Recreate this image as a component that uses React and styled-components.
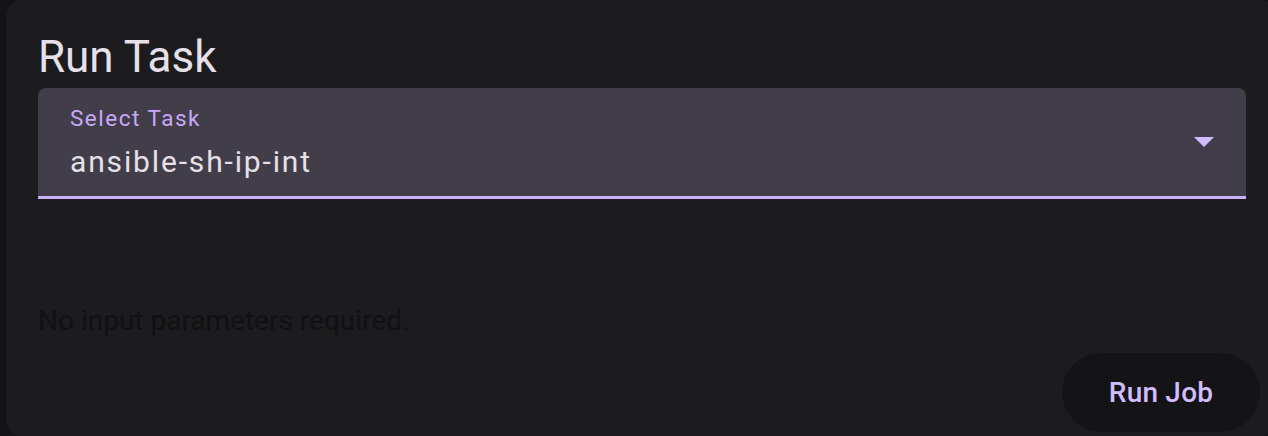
import styled, { createGlobalStyle } from "styled-components";

const GlobalStyle = createGlobalStyle`
  html, body {
    margin: 0;
    padding: 0;
    background: #141316;
    overflow: hidden;
    font-family: Roboto, "Liberation Sans", sans-serif;
  }
`;

const Card = styled.div`
  margin-left: 6px;
  margin-right: -10px;
  height: 436px;
  box-sizing: border-box;
  background: #1c1b1e;
  border-radius: 16px;
  padding: 26px 32px 0 32px;
  display: flex;
  flex-direction: column;
`;

const Title = styled.h1`
  margin: 0;
  font-size: 44px;
  font-weight: 400;
  line-height: 62px;
  color: #e6e0e9;
`;

const Field = styled.div`
  position: relative;
  height: 111px;
  box-sizing: border-box;
  background: #413e49;
  border-radius: 8px 8px 0 0;
  border-bottom: 3px solid #cbb0fb;
  padding: 16px 32px 0 32px;
  display: flex;
  flex-direction: column;
  cursor: pointer;
`;

const Label = styled.span`
  font-size: 22.5px;
  line-height: 28px;
  color: #c9a8f7;
  letter-spacing: 1.5px;
`;

const Value = styled.span`
  margin-top: 10px;
  font-size: 30px;
  line-height: 40px;
  color: #e6e0e9;
  letter-spacing: 1.85px;
`;

const Arrow = styled.svg`
  position: absolute;
  right: 32px;
  top: 50%;
  transform: translateY(-50%);
`;

const Note = styled.p`
  margin: 106px 0 0 0;
  font-size: 28px;
  line-height: 32px;
  color: #111113;
`;

const Actions = styled.div`
  display: flex;
  justify-content: flex-end;
  margin-top: 16px;
  margin-right: -14px;
`;

const Button = styled.button`
  height: 79px;
  width: 198px;
  border: none;
  border-radius: 40px;
  background: #141316;
  color: #d0bcff;
  font-family: Roboto, "Liberation Sans", sans-serif;
  font-size: 28px;
  font-weight: 500;
  letter-spacing: 0.2px;
  cursor: pointer;
`;

export default function App() {
  return (
    <>
      <GlobalStyle />
      <Card>
        <Title>Run Task</Title>
        <Field>
          <Label>Select Task</Label>
          <Value>ansible-sh-ip-int</Value>
          <Arrow width="20" height="10" viewBox="0 0 20 10">
            <path d="M0 0 L20 0 L10 10 Z" fill="#d0bcff" />
          </Arrow>
        </Field>
        <Note>No input parameters required.</Note>
        <Actions>
          <Button>Run Job</Button>
        </Actions>
      </Card>
    </>
  );
}
